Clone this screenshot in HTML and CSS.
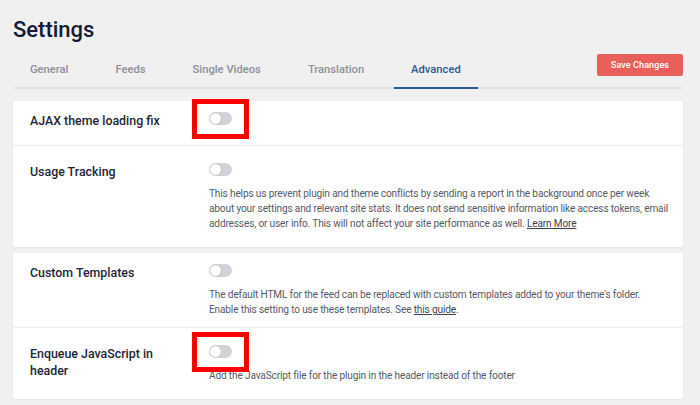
FILE: index.html
```html
<!DOCTYPE html>
<html lang="en">

<head>
    <meta charset="UTF-8">
    <meta name="viewport" content="width=device-width, initial-scale=1.0">
    <title>Settings</title>
    <link rel="stylesheet" href="styles.css">
</head>

<body>
    <div class="page">
        <h1>Settings</h1>

        <div class="nav-bar">
            <div class="tabs">
                <a class="tab">General</a>
                <a class="tab">Feeds</a>
                <a class="tab">Single Videos</a>
                <a class="tab">Translation</a>
                <a class="tab active">Advanced</a>
            </div>
            <button class="save-button">Save Changes</button>
        </div>

        <div class="settings-card">
            <div class="setting-row">
                <div class="setting-label">AJAX theme loading fix</div>
                <div class="setting-control">
                    <span class="toggle marked"></span>
                </div>
            </div>
            <div class="setting-row">
                <div class="setting-label">Usage Tracking</div>
                <div class="setting-control">
                    <span class="toggle"></span>
                    <p class="setting-desc">This helps us prevent plugin and theme conflicts by sending a report in the background once per week about your settings and relevant site stats. It does not send sensitive information like access tokens, email addresses, or user info. This will not affect your site performance as well. <a href="#">Learn More</a></p>
                </div>
            </div>
        </div>

        <div class="settings-card">
            <div class="setting-row tight">
                <div class="setting-label">Custom Templates</div>
                <div class="setting-control">
                    <span class="toggle"></span>
                    <p class="setting-desc">The default HTML for the feed can be replaced with custom templates added to your theme's folder. Enable this setting to use these templates. See <a href="#">this guide</a>.</p>
                </div>
            </div>
            <div class="setting-row">
                <div class="setting-label">Enqueue JavaScript in header</div>
                <div class="setting-control">
                    <span class="toggle marked"></span>
                    <p class="setting-desc">Add the JavaScript file for the plugin in the header instead of the footer</p>
                </div>
            </div>
        </div>
    </div>
</body>

</html>
```

FILE: styles.css
```css
body {
    margin: 0;
    background-color: #f0f0f1;
    font-family: Roboto, "Liberation Sans", sans-serif;
    color: #1e2533;
}

.page {
    width: 670px;
    margin-left: 13px;
}

h1 {
    margin: 17px 0 11px;
    font-size: 22px;
    line-height: 26px;
    font-weight: 500;
    color: #141b38;
}

.nav-bar {
    display: flex;
    justify-content: space-between;
    align-items: flex-start;
    border-bottom: 2px solid #e3e3e5;
    margin-bottom: 12px;
}

.tabs {
    display: flex;
    gap: 13px;
    padding-top: 8px;
}

.tab {
    padding: 0 17px 9px;
    font-size: 11.2px;
    line-height: 16px;
    font-weight: 500;
    color: #8c8f9a;
    border-bottom: 2px solid transparent;
    margin-bottom: -2px;
}

.tab.active {
    color: #2c5a8c;
    border-bottom-color: #2c5a8c;
}

.save-button {
    width: 86px;
    height: 22px;
    background-color: #e9605a;
    color: white;
    border: none;
    border-radius: 2px;
    font-family: inherit;
    font-size: 9px;
    font-weight: 500;
    letter-spacing: 0.1px;
    cursor: pointer;
}

.settings-card {
    background-color: white;
    border-radius: 2px;
    box-shadow: 0 1px 2px rgba(0, 0, 0, 0.06);
    margin-bottom: 6px;
}

.setting-row {
    display: grid;
    grid-template-columns: 179px 1fr;
    padding: 17px 14px 16px 17px;
    border-top: 1px solid #eeeeef;
}

.setting-row:first-child {
    padding-top: 11px;
    border-top: none;
}

.setting-row.tight {
    padding-bottom: 10px;
}

.setting-label {
    font-size: 12.4px;
    line-height: 17px;
    font-weight: 500;
    padding-right: 20px;
}

.setting-control {
    position: relative;
}

.toggle {
    display: block;
    position: relative;
    width: 23px;
    height: 13px;
    border-radius: 7px;
    background-color: #d2d3d9;
}

.toggle::after {
    content: "";
    position: absolute;
    left: 1px;
    top: 1px;
    width: 11px;
    height: 11px;
    border-radius: 50%;
    background-color: white;
    box-shadow: 0 0 1px rgba(0, 0, 0, 0.35);
}

/* red annotation frame drawn over the switch */
.toggle.marked::before {
    content: "";
    position: absolute;
    left: -17px;
    top: -13px;
    width: 57px;
    height: 40px;
    box-sizing: border-box;
    border: 5px solid #ff0000;
}

.setting-desc {
    margin: 10px 0 0;
    font-size: 10.1px;
    line-height: 15px;
    letter-spacing: -0.15px;
    color: #555a66;
}

.setting-desc a {
    color: #3d4250;
}
```
